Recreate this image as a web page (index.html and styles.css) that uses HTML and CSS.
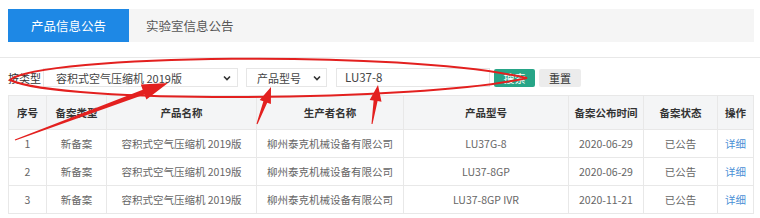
FILE: index.html
```html
<!DOCTYPE html>
<html lang="zh-CN">
<head>
<meta charset="utf-8">
<title>产品信息公告</title>
<link rel="stylesheet" href="styles.css">
</head>
<body>
<div class="page">
  <div class="tabs">
    <div class="tab active">产品信息公告</div>
    <div class="tab">实验室信息公告</div>
  </div>
  <div class="divider"></div>
  <div class="filters">
    <span class="label">按类型</span>
    <div class="select sel-type">
      <span>容积式空气压缩机 2019版</span>
      <svg class="chev" width="8" height="6" viewBox="0 0 8 6"><polyline points="1,1.5 4,4.5 7,1.5" fill="none" stroke="#333" stroke-width="1.6"/></svg>
    </div>
    <div class="select sel-field">
      <span>产品型号</span>
      <svg class="chev" width="8" height="6" viewBox="0 0 8 6"><polyline points="1,1.5 4,4.5 7,1.5" fill="none" stroke="#333" stroke-width="1.6"/></svg>
    </div>
    <div class="input">LU37-8</div>
    <button class="btn btn-search">搜索</button>
    <button class="btn btn-reset">重置</button>
  </div>
  <table class="grid">
    <colgroup>
      <col class="c1"><col class="c2"><col class="c3"><col class="c4"><col class="c5"><col class="c6"><col class="c7"><col class="c8">
    </colgroup>
    <thead>
      <tr><th>序号</th><th>备案类型</th><th>产品名称</th><th>生产者名称</th><th>产品型号</th><th>备案公布时间</th><th>备案状态</th><th>操作</th></tr>
    </thead>
    <tbody>
      <tr><td>1</td><td>新备案</td><td>容积式空气压缩机 2019版</td><td>柳州泰克机械设备有限公司</td><td>LU37G-8</td><td>2020-06-29</td><td>已公告</td><td><a class="link">详细</a></td></tr>
      <tr><td>2</td><td>新备案</td><td>容积式空气压缩机 2019版</td><td>柳州泰克机械设备有限公司</td><td>LU37-8GP</td><td>2020-06-29</td><td>已公告</td><td><a class="link">详细</a></td></tr>
      <tr><td>3</td><td>新备案</td><td>容积式空气压缩机 2019版</td><td>柳州泰克机械设备有限公司</td><td>LU37-8GP IVR</td><td>2020-11-21</td><td>已公告</td><td><a class="link">详细</a></td></tr>
    </tbody>
  </table>
  <svg class="marks" width="760" height="218" viewBox="0 0 760 218">
    <path d="M10,80 C40,55 400,49 527,78 C420,102 60,104 10,80 Z" fill="none" stroke="#e3201f" stroke-width="2"/>
    <polygon fill="#e3201f" points="15.2,140.5 144.5,94.4 146.4,99.6 168,83 140.8,84.6 142.7,89.8 14.8,139.5"/>
    <polygon fill="#e3201f" points="257.5,124.2 267.2,102.7 270.9,104.1 271,87 259.7,99.9 263.4,101.3 256.5,123.8"/>
    <polygon fill="#e3201f" points="372.5,124.1 377.6,101.1 381.5,101.7 378,85 369.7,99.9 373.6,100.5 371.5,123.9"/>
  </svg>
</div>
</body>
</html>
```
FILE: styles.css
```css
html, body {
  margin: 0;
  padding: 0;
  background: #ffffff;
}
.page {
  position: relative;
  width: 760px;
  height: 218px;
  overflow: hidden;
  font-family: "Noto Sans CJK SC", "Noto Sans", sans-serif;
  color: #333;
}
.tabs {
  display: flex;
  margin: 9px 6px 0 8px;
  height: 33px;
  background: #f5f5f5;
}
.tab {
  display: flex;
  align-items: center;
  font-size: 12.5px;
  color: #555;
  padding: 0 17px;
}
.tab.active {
  width: 121px;
  padding: 0;
  justify-content: center;
  background: #1e88e5;
  color: #fff;
}
.divider {
  margin-top: 15px;
  border-top: 1px solid #e8e8e8;
}
.filters {
  display: flex;
  align-items: center;
  margin: 10px 0 0 8px;
  height: 19px;
  font-size: 11px;
}
.label {
  width: 35px;
  color: #333;
}
.select {
  display: flex;
  align-items: center;
  justify-content: space-between;
  box-sizing: border-box;
  height: 19px;
  border: 1px solid #e6e6e6;
  background: #fff;
  color: #444;
}
.sel-type {
  width: 195px;
  padding: 0 6px 0 12px;
}
.sel-field {
  width: 81px;
  margin-left: 8px;
  padding: 0 5px 0 10px;
}
.input {
  box-sizing: border-box;
  width: 154px;
  height: 19px;
  margin-left: 9px;
  padding-left: 8px;
  border: 1px solid #e6e6e6;
  line-height: 17px;
  color: #444;
  font-size: 11.5px;
}
.btn {
  height: 18px;
  width: 41px;
  border: 0;
  border-radius: 2px;
  font-family: inherit;
  font-size: 11px;
  padding: 0;
  line-height: 18px;
}
.btn-search {
  margin-left: 4px;
  background: #27a587;
  color: #fff;
}
.btn-reset {
  margin-left: 4px;
  width: 42px;
  background: #ececec;
  color: #333;
}
.grid {
  margin: 8px 0 0 8px;
  width: 745px;
  border-collapse: collapse;
  table-layout: fixed;
  font-size: 10.5px;
}
.c1 { width: 38px; }
.c2 { width: 60px; }
.c3 { width: 150px; }
.c4 { width: 147px; }
.c5 { width: 165px; }
.c6 { width: 75px; }
.c7 { width: 74px; }
.c8 { width: 36px; }
.grid th, .grid td {
  border: 1px solid #e8e8e8;
  text-align: center;
  padding: 0;
  white-space: nowrap;
  overflow: hidden;
}
.grid th {
  height: 33px;
  background: #f4f5f6;
  color: #333;
  font-weight: bold;
}
.grid td {
  height: 27px;
  color: #666;
}
.link {
  color: #4a8fd6;
}
.marks {
  position: absolute;
  left: 0;
  top: 0;
  pointer-events: none;
}
```
